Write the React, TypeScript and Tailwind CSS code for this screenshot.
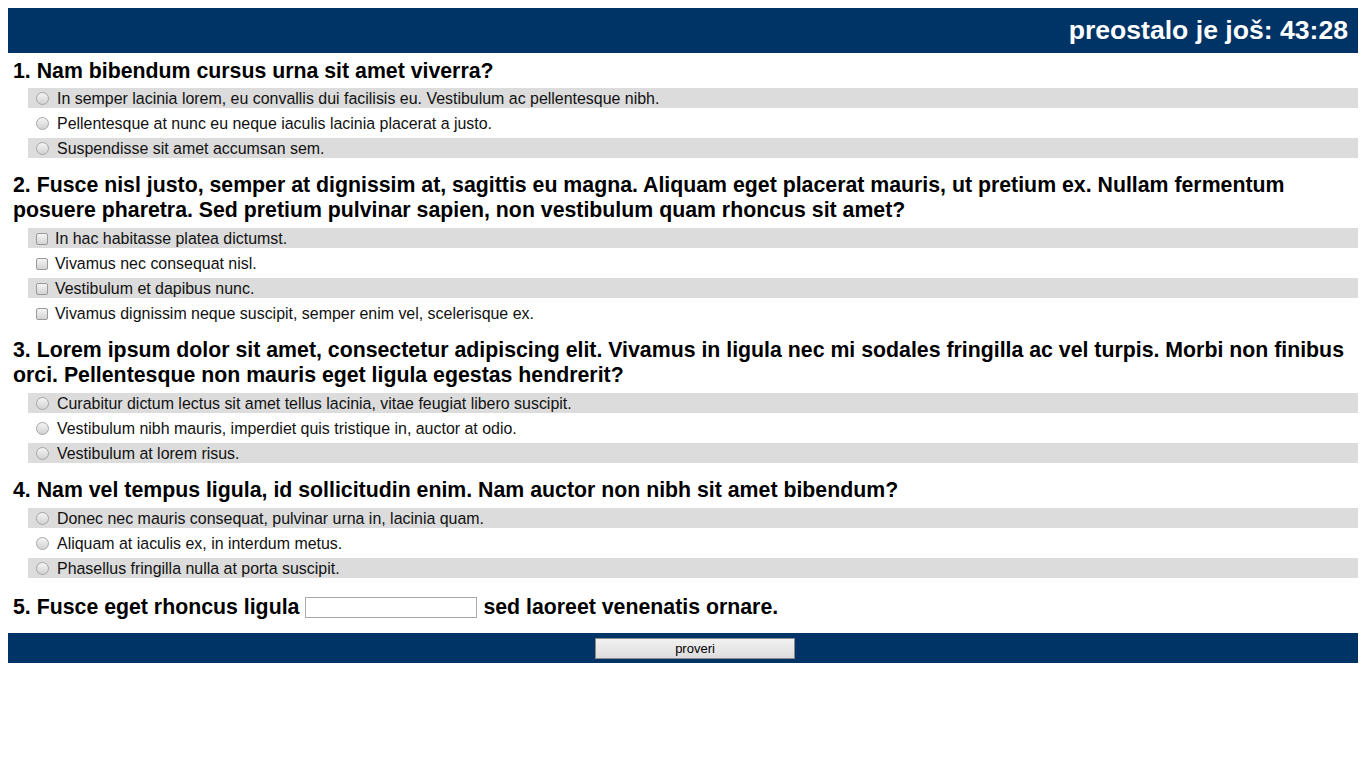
import React from "react";

type Q = { n: number; title: string; type: "radio" | "checkbox"; options: string[] };

const questions: Q[] = [
  {
    n: 1,
    title: "Nam bibendum cursus urna sit amet viverra?",
    type: "radio",
    options: [
      "In semper lacinia lorem, eu convallis dui facilisis eu. Vestibulum ac pellentesque nibh.",
      "Pellentesque at nunc eu neque iaculis lacinia placerat a justo.",
      "Suspendisse sit amet accumsan sem.",
    ],
  },
  {
    n: 2,
    title:
      "Fusce nisl justo, semper at dignissim at, sagittis eu magna. Aliquam eget placerat mauris, ut pretium ex. Nullam fermentum posuere pharetra. Sed pretium pulvinar sapien, non vestibulum quam rhoncus sit amet?",
    type: "checkbox",
    options: [
      "In hac habitasse platea dictumst.",
      "Vivamus nec consequat nisl.",
      "Vestibulum et dapibus nunc.",
      "Vivamus dignissim neque suscipit, semper enim vel, scelerisque ex.",
    ],
  },
  {
    n: 3,
    title:
      "Lorem ipsum dolor sit amet, consectetur adipiscing elit. Vivamus in ligula nec mi sodales fringilla ac vel turpis. Morbi non finibus orci. Pellentesque non mauris eget ligula egestas hendrerit?",
    type: "radio",
    options: [
      "Curabitur dictum lectus sit amet tellus lacinia, vitae feugiat libero suscipit.",
      "Vestibulum nibh mauris, imperdiet quis tristique in, auctor at odio.",
      "Vestibulum at lorem risus.",
    ],
  },
  {
    n: 4,
    title: "Nam vel tempus ligula, id sollicitudin enim. Nam auctor non nibh sit amet bibendum?",
    type: "radio",
    options: [
      "Donec nec mauris consequat, pulvinar urna in, lacinia quam.",
      "Aliquam at iaculis ex, in interdum metus.",
      "Phasellus fringilla nulla at porta suscipit.",
    ],
  },
];

function Radio() {
  return (
    <span className="ml-[8px] mr-[8px] inline-block h-[13px] w-[13px] shrink-0 rounded-full border border-[#a6a6a6] bg-gradient-to-b from-[#f4f4f4] to-[#d2d2d2]" />
  );
}

function Check() {
  return (
    <span className="ml-[8px] mr-[7px] inline-block h-[12px] w-[12px] shrink-0 rounded-[2px] border border-[#9a9a9a] bg-gradient-to-b from-[#f4f4f4] to-[#d4d4d4]" />
  );
}

export default function App() {
  return (
    <div
      className="p-2 text-black"
      style={{ fontFamily: '"Liberation Sans", Arial, sans-serif' }}
    >
      <div className="flex h-[45px] items-center justify-end bg-[#003366] pr-[10px] text-[26.6px] font-bold text-white">
        preostalo je još: 43:28
      </div>
      {questions.map((q, qi) => (
        <div key={q.n} className={qi === 0 ? "mt-[6px]" : "mt-[15px]"}>
          <h2 className="pl-[5px] pr-[4px] text-[21.3px] font-bold leading-[25px]">
            {q.n}. {q.title}
          </h2>
          <ul className={qi === 0 ? "mt-[4px] pl-[20px]" : "mt-[5px] pl-[20px]"}>
            {q.options.map((o, i) => (
              <li
                key={i}
                className={
                  "mb-[5px] flex h-[20px] items-center pt-px text-[15.95px] leading-[20px] text-[#111] " +
                  (i % 2 === 0 ? "bg-[#dcdcdc]" : "")
                }
              >
                {q.type === "radio" ? <Radio /> : <Check />}
                <span>{o}</span>
              </li>
            ))}
          </ul>
        </div>
      ))}
      <div className="mt-[17px] flex items-center pl-[5px] text-[21.3px] font-bold leading-[25px]">
        <span>5. Fusce eget rhoncus ligula</span>
        <input
          type="text"
          className="mx-[6px] h-[21px] w-[172px] border border-[#a9a9a9] bg-white px-1 text-[15px] font-normal"
        />
        <span>sed laoreet venenatis ornare.</span>
      </div>
      <div className="mt-[13px] flex h-[30px] items-center justify-center bg-[#003366]">
        <button className="ml-[24px] h-[21px] w-[200px] border border-[#8a8a8a] bg-gradient-to-b from-[#f2f2f2] to-[#dddddd] text-[13px] leading-[19px] text-black">
          proveri
        </button>
      </div>
    </div>
  );
}
